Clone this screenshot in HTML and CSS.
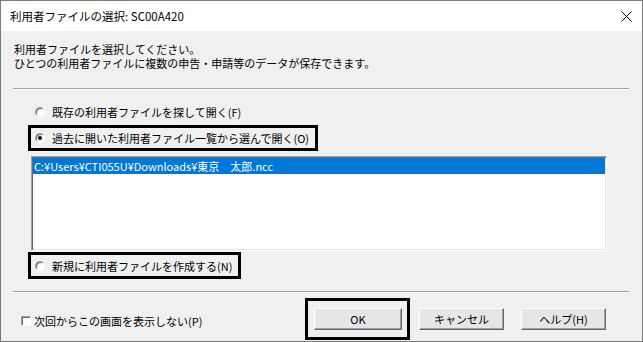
FILE: index.html
```html
<!DOCTYPE html>
<html lang="ja">
<head>
  <meta charset="UTF-8" />
  <title>利用者ファイルの選択</title>
  <link rel="stylesheet" href="styles.css">
</head>
<body>
  <div class="window">
    <div class="titlebar">
      <span class="title">利用者ファイルの選択: SC00A420</span>
      <svg class="close" width="11" height="11" viewBox="0 0 11 11">
        <path d="M0.5 0.5 L10.5 10.5 M10.5 0.5 L0.5 10.5" stroke="#000" stroke-width="1" fill="none"/>
      </svg>
    </div>
    <div class="content">
      <div class="message">
        <div class="line">利用者ファイルを選択してください。</div>
        <div class="line">ひとつの利用者ファイルに複数の申告・申請等のデータが保存できます。</div>
      </div>
      <hr class="etched">
      <div class="options">
        <label class="option"><span class="radio"></span>既存の利用者ファイルを探して開く(F)</label>
        <label class="option marked"><span class="radio checked"></span>過去に開いた利用者ファイル一覧から選んで開く(O)</label>
        <div class="listbox">
          <div class="item selected">C:¥Users¥CTI055U¥Downloads¥東京　太郎.ncc</div>
        </div>
        <label class="option marked last"><span class="radio"></span>新規に利用者ファイルを作成する(N)</label>
      </div>
      <hr class="etched">
      <div class="footer">
        <label class="check"><span class="checkbox"></span>次回からこの画面を表示しない(P)</label>
        <div class="buttons">
          <div class="marked-btn"><button class="btn ok">OK</button></div>
          <button class="btn">キャンセル</button>
          <button class="btn">ヘルプ(H)</button>
        </div>
      </div>
    </div>
  </div>
</body>
</html>
```

FILE: styles.css
```css
body {
  margin: 0;
  font-family: 'Noto Sans CJK JP', 'Liberation Sans', sans-serif;
  font-size: 11px;
  color: #000;
  background: #fff;
}

.window {
  width: 643px;
  height: 342px;
  box-sizing: border-box;
  border: 1px solid #7a7a7a;
  background: #f0f0f0;
  display: flex;
  flex-direction: column;
}

.titlebar {
  height: 30px;
  background: #fff;
  display: flex;
  align-items: center;
  justify-content: space-between;
  padding: 0 10px 0 9px;
}

.title {
  font-size: 11.5px;
}

.content {
  flex: 1;
  padding: 0 13px 0 12px;
  display: flex;
  flex-direction: column;
}

.message {
  margin: 11px 0 0 1px;
}

.message .line {
  height: 14px;
  line-height: 14px;
}

hr.etched {
  height: 0;
  margin: 0;
  border: none;
  border-top: 1px solid #a0a0a0;
  border-bottom: 1px solid #fff;
}

.message + hr.etched {
  margin-top: 18px;
}

.options {
  padding-top: 9px;
  display: flex;
  flex-direction: column;
  align-items: flex-start;
}

.option {
  display: flex;
  align-items: center;
  gap: 7px;
  height: 20px;
  padding: 0 6px 0 4px;
  margin-left: 15px;
  border: 3px solid transparent;
}

.option.marked {
  border-color: #000;
}

.option.last {
  margin-top: 1px;
  height: 21px;
}

.radio {
  width: 8px;
  height: 8px;
  border-radius: 50%;
  border: 1px solid;
  border-color: #a0a0a0 #fff #fff #a0a0a0;
  background: #fff;
  box-shadow: inset 1px 1px 0 #696969;
  display: flex;
  align-items: center;
  justify-content: center;
}

.radio.checked::after {
  content: '';
  width: 4px;
  height: 4px;
  border-radius: 50%;
  background: #000;
}

.listbox {
  margin: 5px 0 0 18px;
  width: 576px;
  height: 95px;
  box-sizing: border-box;
  border: 1px solid;
  border-color: #a0a0a0 #fff #fff #a0a0a0;
  box-shadow: inset 1px 1px 0 #696969, inset -1px -1px 0 #e3e3e3;
  background: #fff;
  padding: 1px;
}

.item {
  height: 16px;
  line-height: 16px;
  padding-left: 1px;
  white-space: nowrap;
}

.item.selected {
  background: #0078d7;
  color: #fff;
}

.options + hr.etched {
  margin-top: 12px;
}

.footer {
  flex: 1;
  display: flex;
  align-items: center;
  padding-top: 3px;
}

.check {
  display: flex;
  align-items: center;
  gap: 3px;
  margin: 4px 0 0 8px;
}

.checkbox {
  width: 8px;
  height: 8px;
  border: 1px solid;
  border-color: #a0a0a0 #fff #fff #a0a0a0;
  box-shadow: inset 1px 1px 0 #696969;
  background: #fff;
}

.buttons {
  margin-left: auto;
  margin-right: 23px;
  display: flex;
  align-items: center;
  gap: 17px;
}

.marked-btn {
  border: 3px solid #000;
  padding: 7px 5px 7px 6px;
  margin-right: -8px;
  display: flex;
}

.btn {
  width: 85px;
  height: 22px;
  font: inherit;
  color: #000;
  background: #e6e6e6;
  border: 1px solid;
  border-color: #fff #696969 #696969 #fff;
  box-shadow: inset -1px -1px 0 #a0a0a0;
  padding: 0;
}

.btn.ok {
  width: 88px;
}
```
